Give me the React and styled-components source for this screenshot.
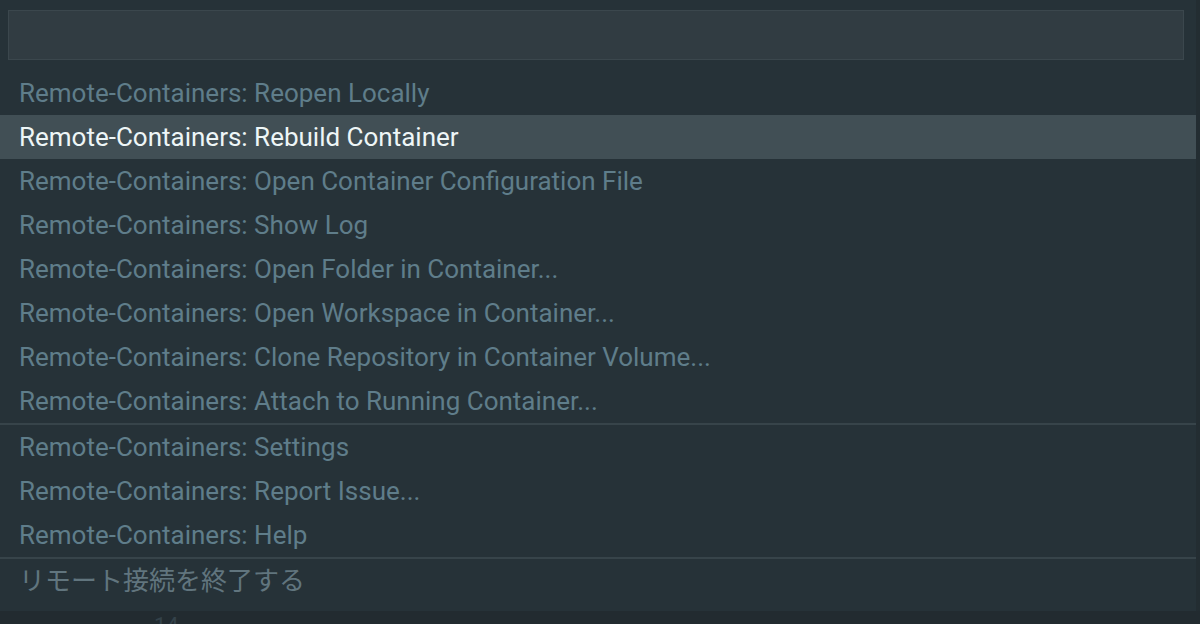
import styled, { createGlobalStyle } from "styled-components";

const GlobalStyle = createGlobalStyle`
  html, body {
    margin: 0;
    padding: 0;
    background: #222b30;
    overflow: hidden;
  }
  body {
    font-family: Roboto, "Noto Sans CJK JP", sans-serif;
  }
`;

const groups = [
  [
    "Remote-Containers: Reopen Locally",
    "Remote-Containers: Rebuild Container",
    "Remote-Containers: Open Container Configuration File",
    "Remote-Containers: Show Log",
    "Remote-Containers: Open Folder in Container...",
    "Remote-Containers: Open Workspace in Container...",
    "Remote-Containers: Clone Repository in Container Volume...",
    "Remote-Containers: Attach to Running Container...",
  ],
  [
    "Remote-Containers: Settings",
    "Remote-Containers: Report Issue...",
    "Remote-Containers: Help",
  ],
];

function App() {
  return (
    <Screen>
      <GlobalStyle />
      <Top>
        <Palette>
          <InputWrap>
            <SearchInput />
          </InputWrap>
          <List>
            {groups.map((items, gi) => (
              <Group key={gi} $first={gi === 0}>
                {items.map((label, i) => (
                  <Item key={label} $active={gi === 0 && i === 1}>
                    {label}
                  </Item>
                ))}
              </Group>
            ))}
            <Group>
              <Item $muted>リモート接続を終了する</Item>
            </Group>
          </List>
        </Palette>
        <Gutter />
      </Top>
      <Editor>
        <LineNo>14</LineNo>
      </Editor>
    </Screen>
  );
}

const Screen = styled.div`
  width: 1200px;
  height: 624px;
  display: flex;
  flex-direction: column;
  background: #222b30;
`;

const Top = styled.div`
  display: flex;
`;

const Palette = styled.div`
  width: 1196px;
  height: 611px;
  background: #263238;
  display: flex;
  flex-direction: column;
`;

const Gutter = styled.div`
  flex: 1;
  background: #232d32;
`;

const InputWrap = styled.div`
  padding: 10px 12px 11px 8px;
`;

const SearchInput = styled.div`
  height: 48px;
  background: #313c42;
  border: 1px solid #3b474d;
`;

const List = styled.div`
  display: flex;
  flex-direction: column;
`;

const Group = styled.div`
  border-top: ${(p) => (p.$first ? "none" : "2px solid #37444a")};
`;

const Item = styled.div`
  height: 44px;
  line-height: 44px;
  padding-left: 19px;
  font-size: 26px;
  white-space: nowrap;
  color: ${(p) => (p.$active ? "#eef6f7" : p.$muted ? "#61757e" : "#5f7d8a")};
  background: ${(p) => (p.$active ? "#414f55" : "transparent")};
`;

const Editor = styled.div`
  flex: 1;
  position: relative;
  background: #222b30;
  overflow: hidden;
`;

const LineNo = styled.div`
  position: absolute;
  left: 154px;
  top: 2px;
  font-size: 22px;
  color: #34424a;
`;

export default App;
